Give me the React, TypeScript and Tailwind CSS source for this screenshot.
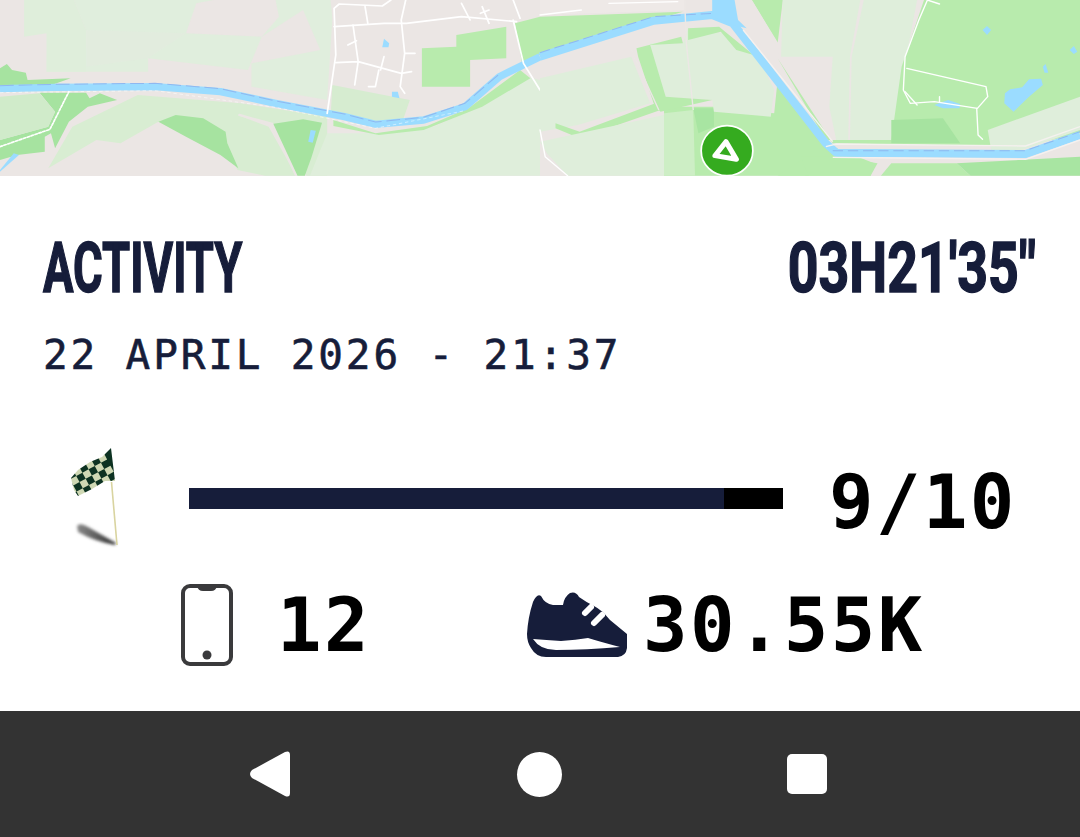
const NAVY = '#161d3a'

// Background of the map, coordinates taken from the 3x crops
const MapView = () => {
  const light = '#dfeedb'
  const mid = '#b8ebad'
  const dark = '#a6e3a0'
  const water = '#9bdcff'
  return (
    <svg viewBox="0 0 1080 176" className="block w-full h-full blur-[0.5px]">
      <rect width="1080" height="176" fill="#ebe6e4" />
      <g transform="scale(0.3444 0.3333)">
        <path fill={light} d="M70 0H215L250 90V145L135 165V215H430V175L720 210L760 110L540 100L570 10L620 0H800L810 50L760 110L880 30L930 150L730 190V260L950 300L975 170L960 0L0 0Z" opacity="0.9" />
        <path fill="#ebe6e4" d="M250 90L540 100L430 175L250 200Z" opacity="0.2" />
        <path fill="#ebe6e4" d="M0 0H70L135 165V235H0Z" />
        <path fill="#ebe6e4" d="M975 0H1568V250L1190 350L950 300L965 60Z" />
        <path fill={light} d="M70 0H215L250 90V215H135V100L70 110Z" />
        <path fill="#d8edd2" d="M140 505L210 380L400 285L700 310L950 350V527H890L800 375L690 345L780 380L860 527H770L690 510L640 420L460 365L350 430L280 420Z" />
        <path fill={dark} d="M460 365L510 345L590 355L655 395L660 430L692 505L640 465L540 410Z" />
        <path fill={dark} d="M790 372L880 358L935 368L905 470L885 527H860Z" />
        <path fill={dark} d="M0 205L20 192L35 210L75 218L80 240L205 235L150 255H0Z" />
        <path fill={dark} d="M115 278H250L260 295L290 280L340 300L255 320L200 365L160 445L148 400L130 410V455L50 465L0 480V420L140 380L160 335Z" />
        <path fill="#d0ebca" d="M0 290L115 280L160 335L140 380L0 420Z" />
        <path fill={mid} d="M1225 145L1325 140V105L1470 80V175L1365 180V260H1225Z" />
        <path fill={mid} d="M1495 70L1568 50V165L1515 185Z" />
        <path fill="#d6ecd0" d="M965 255L1190 300L1170 360L1080 370L960 350Z" />
        <path fill={light} d="M950 400L1100 400L1260 380L1370 330L1510 225L1568 240V527H900Z" />
        <path fill={mid} d="M968 360L1090 400L1240 378L1360 325L1510 210L1540 235L1400 320L1230 390L1100 405L968 378Z" />
        <path fill="none" stroke={water} strokeWidth="22" strokeLinejoin="round" d="M0 266L160 262L450 260L640 275L800 310L1000 350L1090 373L1230 360L1350 320L1450 230L1568 170" />
        <path fill="none" stroke="#8fb8f0" strokeWidth="3" strokeDasharray="40 14" d="M0 257L160 253L450 250L640 266L800 303L1000 342L1090 366L1230 352L1350 310L1450 222" />
        <path fill="none" stroke="#ffffff" strokeWidth="3" opacity="0.5" strokeDasharray="10 8" d="M0 278L450 272L800 322L1090 385L1350 332" />
        <path fill={water} d="M0 510L40 460L55 465L0 515Z" />
        <path fill={water} d="M1110 142L1115 116L1130 130L1128 142Z" />
        <path fill={water} d="M1138 290V275H1155L1160 295Z" />
        <path fill={water} d="M895 425L902 390L917 392L908 428Z" />
        <g fill="none" stroke="#ffffff" strokeWidth="5" strokeLinejoin="round" strokeLinecap="round">
          <path d="M1135 0L1110 18L985 12L970 25L975 165L950 340" />
          <path d="M970 80L1115 70L1180 70L1340 50L1500 65" />
          <path d="M1060 20L1068 70M1025 75L1040 185L1030 255M975 188L1040 185L1165 220L1195 215M1100 210L1090 260L1070 260" />
          <path d="M1178 0L1165 60L1175 160L1162 260L1175 280M1175 160L1205 160" />
          <path d="M1115 170L1105 210M1010 135L1035 122" />
          <path d="M1340 10L1365 60M1400 20L1420 70M1490 60L1520 190L1568 270M1420 30L1395 40M1490 0L1510 55" />
          <path strokeDasharray="7 5" d="M0 440L145 388L200 275" />
          <path d="M790 372L860 527" stroke="#ebe6e4" strokeWidth="7" />
          <path d="M695 345L790 372" stroke="#ebe6e4" strokeWidth="7" />
        </g>
      </g>
      <g transform="translate(540 0) scale(0.3444 0.3333)">
        <path fill={mid} d="M0 50L415 35L0 165Z" />
        <path fill={mid} d="M615 0H705L690 130Z" />
        <path fill={light} d="M705 0H930L900 170L895 420H860L840 320L850 170L700 170Z" />
        <path fill={light} d="M940 0H1095L1060 190L1020 420H900L905 170Z" />
        <path fill={mid} d="M1115 0H1568V400L1400 440L850 430L690 175L830 420H1020L1050 200Z" />
        <path fill={mid} d="M360 320L510 320L680 340L690 240L850 440L970 490L960 527H360Z" />
        <path fill="#cdeec5" d="M360 340L445 330L450 527H360Z" />
        <path fill="#a8e5a2" d="M445 325H505V380L460 400Z" />
        <path fill={light} d="M505 335L670 350L680 270L640 180L530 100L430 85L415 130L320 130L320 200L365 290L500 300Z" />
        <path fill={mid} d="M430 85L520 80L620 165L570 150L525 95L430 120Z" />
        <path fill={mid} d="M280 145L410 110L415 130L320 135L365 290L500 300L350 335L330 310L285 170Z" />
        <path fill="#f0ebe9" d="M0 0H420V30L0 45Z" opacity="0.6" />
        <path fill={light} d="M0 235L265 170L320 310L110 375L0 395Z" />
        <path fill={mid} d="M45 370L115 395L335 310L350 330L115 415L45 385Z" />
        <path fill={light} d="M0 425L360 345V527H80L20 460Z" />
        <path fill={dark} d="M1020 360L1170 355L1220 430H1020Z" />
        <path fill={light} d="M1300 390L1568 290V390L1400 450H1310Z" />
        <path fill={mid} d="M760 470L860 470L980 490L960 527H770Z" />
        <path fill={mid} d="M1020 490L1210 490L1250 527H990Z" />
        <path fill="#a8e5a2" d="M1210 490L1568 470V527H1250Z" />
        <path fill={mid} d="M690 527L760 480L780 527Z" />
        <path fill="#ebe6e4" d="M570 0H615L695 135L690 170L660 170Z" />
        <path fill="none" stroke={water} strokeWidth="24" strokeLinejoin="round" d="M0 170L330 62L500 45L560 70L830 430L860 458L1410 462L1568 405" />
        <path fill={water} d="M500 0H565L575 60L600 85L560 75L500 50Z" />
        <path fill="none" stroke="#8fb8f0" strokeWidth="3" strokeDasharray="30 14" d="M0 158L330 50L500 40M850 452L1410 452L1568 395" />
        <path fill="none" stroke="#f5f1ef" strokeWidth="4" d="M830 440L860 432L1410 438L1568 380M850 472L1410 478L1568 420M590 90L850 425" />
        <path fill={water} d="M1285 90L1298 78L1310 90L1298 105Z" />
        <path fill={water} d="M1538 150L1550 138L1560 155L1550 162Z" />
        <path fill={water} d="M1460 200L1468 192L1476 218L1465 218Z" />
        <path fill={water} d="M1350 280L1365 268L1400 262L1420 238L1455 236L1460 255L1420 290L1375 335L1348 310Z" />
        <path fill={water} d="M1145 315L1185 300L1220 312L1218 325H1170Z" />
        <g fill="none" stroke="#ffffff" strokeWidth="4" strokeLinejoin="round" strokeLinecap="round">
          <path d="M1160 12L1125 0L1100 60L1060 170L1055 270L1075 310L1145 305L1270 325L1300 290L1295 260L1065 205" />
          <path d="M1060 275L1095 315M1268 325L1272 405L1285 418M1160 290V305" />
          <path d="M0 390L15 470L80 527" />
          <path d="M0 45L120 30M200 10L400 5" />
        </g>
        <path fill="none" stroke="#ece7e5" strokeWidth="4" d="M420 0L425 130L445 330M265 150L345 330" />
        <circle cx="543" cy="452" r="75" fill="#35ab1f" stroke="#ffffff" strokeWidth="5" />
        <path fill="none" stroke="#ffffff" strokeWidth="15" strokeLinejoin="round" d="M540 425L570 478L508 467Z" />
      </g>
    </svg>
  )
}

const flagCells = Array.from({ length: 49 }, (_, i) => ({ col: i % 7, row: Math.floor(i / 7) }))

const FlagIcon = () => (
  <svg width="70" height="110" viewBox="0 0 70 110" className="shrink-0 overflow-visible">
    <defs>
      <clipPath id="flag-clip">
        <path d="M3 30L10 22L22 14L34 9L43 0L47 33L37 33L24 41L10 48L6 42Z" />
      </clipPath>
      <filter id="flag-blur"><feGaussianBlur stdDeviation="1.8" /></filter>
      <filter id="flag-soft"><feGaussianBlur stdDeviation="0.5" /></filter>
      <linearGradient id="flag-shadow" x1="0" y1="0" x2="1" y2="0">
        <stop offset="0" stopColor="#888" />
        <stop offset="1" stopColor="#333" />
      </linearGradient>
    </defs>
    <path d="M9 78Q12 74 20 79L48 95L47 97Q28 94 10 84Z" fill="url(#flag-shadow)" filter="url(#flag-blur)" />
    <path d="M43.5 34L49 97" stroke="#d9d4a0" strokeWidth="1.6" />
    <g clipPath="url(#flag-clip)" filter="url(#flag-soft)">
      <rect width="50" height="50" fill="#0d3320" />
      <g transform="rotate(-28 22 24)">
        {flagCells.map(({ col, row }) =>
          (col + row) % 2 === 0 ? (
            <rect key={`${col}-${row}`} x={-6 + col * 7} y={0 + row * 7} width="7" height="7" fill="#cfd8b4" />
          ) : null,
        )}
      </g>
    </g>
  </svg>
)

const PhoneIcon = () => (
  <svg width="52" height="82" viewBox="0 0 52 82" className="shrink-0">
    <rect x="2" y="2" width="48" height="78" rx="7" fill="none" stroke="#3a3a3c" strokeWidth="4" />
    <path d="M16 2H36Q35 7 30 7H22Q17 7 16 2Z" fill="#3a3a3c" />
    <circle cx="26" cy="71" r="4.5" fill="#3a3a3c" />
  </svg>
)

const ShoeIcon = () => (
  <svg width="102" height="66" viewBox="0 0 102 66" className="shrink-0">
    <path
      fill={NAVY}
      d="M1 42Q2 25 7 10Q11 1 15 4Q19 12 27 13L37 13Q38 5 44 1Q50 -1 53 5Q60 10 68 14Q76 18 84 28L101 42V56Q100 64 92 65H20Q10 65 5 56Q1 50 1 42Z"
    />
    <path fill="#ffffff" d="M7 47Q20 48 35 49Q50 48 62 46Q75 50 94 55Q60 58 30 58Q14 58 7 47Z" />
    <path stroke="#ffffff" strokeWidth="6" strokeLinecap="round" d="M59 21L65 15M68 31L76 23" />
  </svg>
)

export default function App() {
  return (
    <div className="w-[1080px] h-[837px] flex flex-col bg-white overflow-hidden">
      <div className="h-[176px] shrink-0 overflow-hidden">
        <MapView />
      </div>

      <main className="flex-1 pl-[43px] pr-[44px] pt-[55px]">
        <div className="flex justify-between h-[74px] items-center font-['Roboto',sans-serif] font-bold text-[70px] leading-none text-[#161d3a] [-webkit-text-stroke:1.5px_#161d3a]">
          <span className="inline-block origin-left scale-x-[0.648]">ACTIVITY</span>
          <span className="inline-block origin-right scale-x-[0.766]">03H21'35"</span>
        </div>

        <p className="mt-[27px] h-[46px] font-['DejaVu_Sans_Mono',monospace] text-[41px] leading-[46px] tracking-[2.85px] text-[#161d3a] whitespace-nowrap [-webkit-text-stroke:0.6px_#161d3a]">
          22 APRIL 2026 - 21:37
        </p>

        <div className="mt-[70px] flex items-start pl-[25px] h-[110px]">
          <FlagIcon />
          <div className="ml-[51px] mt-[40px] w-[594px] h-[21px] bg-black shrink-0">
            <div className="w-[535px] h-full bg-[#161d3a]" />
          </div>
          <span className="ml-[46px] mt-[16px] font-['DejaVu_Sans_Mono',monospace] font-bold text-[74px] leading-[76px] tracking-[2.4px] text-black">
            9/10
          </span>
        </div>

        <div className="mt-[26px] flex items-center pl-[138px] h-[82px] font-['DejaVu_Sans_Mono',monospace] font-bold text-[74px] leading-none tracking-[2.4px] text-black">
          <PhoneIcon />
          <span className="ml-[44px] w-[249px]">12</span>
          <ShoeIcon />
          <span className="ml-[15px]">30.55K</span>
        </div>
      </main>

      <nav className="h-[126px] shrink-0 bg-[#333333] flex items-center pl-[249px]">
        <svg width="44" height="46" viewBox="0 0 44 46" fill="#ffffff">
          <path d="M3 19L36 1Q41 -1 41 4V42Q41 47 36 45L3 27Q-1 23 3 19Z" />
        </svg>
        <div className="ml-[224px] w-[45px] h-[45px] rounded-full bg-white" />
        <div className="ml-[225px] w-[40px] h-[40px] rounded-[5px] bg-white" />
      </nav>
    </div>
  )
}
